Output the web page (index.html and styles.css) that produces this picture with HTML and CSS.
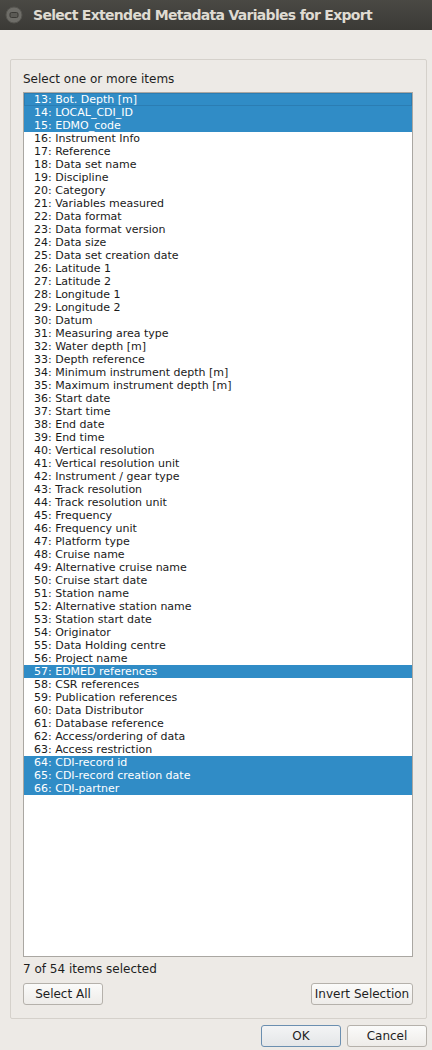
FILE: index.html
```html
<!DOCTYPE html>
<html>
<head>
<meta charset="utf-8">
<link rel="stylesheet" href="styles.css">
</head>
<body>
<div class="titlebar">
  <svg class="close" width="18" height="18" viewBox="0 0 18 18">
    <circle cx="9" cy="9" r="8" fill="#6e6d68" stroke="#55544f" stroke-width="1"/>
    <rect x="5" y="6.5" width="8" height="5" rx="1.5" fill="#5b5a55" stroke="#3a3935" stroke-width="1"/>
  </svg>
  <span class="title">Select Extended Metadata Variables for Export</span>
</div>
<div class="spacer"></div>
<div class="panel">
  <div class="label">Select one or more items</div>
  <div class="list" id="list"></div>
  <div class="status">7 of 54 items selected</div>
  <div class="row-buttons">
    <button class="btn">Select All</button>
    <button class="btn wide">Invert Selection</button>
  </div>
</div>
<div class="dialog-buttons">
  <button class="btn default">OK</button>
  <button class="btn">Cancel</button>
</div>
<script src="app.js"></script>
</body>
</html>
```
FILE: app.js
```js
var items = [
  [13,"Bot. Depth [m]",1],[14,"LOCAL_CDI_ID",1],[15,"EDMO_code",1],
  [16,"Instrument Info"],[17,"Reference"],[18,"Data set name"],[19,"Discipline"],
  [20,"Category"],[21,"Variables measured"],[22,"Data format"],[23,"Data format version"],
  [24,"Data size"],[25,"Data set creation date"],[26,"Latitude 1"],[27,"Latitude 2"],
  [28,"Longitude 1"],[29,"Longitude 2"],[30,"Datum"],[31,"Measuring area type"],
  [32,"Water depth [m]"],[33,"Depth reference"],[34,"Minimum instrument depth [m]"],
  [35,"Maximum instrument depth [m]"],[36,"Start date"],[37,"Start time"],[38,"End date"],
  [39,"End time"],[40,"Vertical resolution"],[41,"Vertical resolution unit"],
  [42,"Instrument / gear type"],[43,"Track resolution"],[44,"Track resolution unit"],
  [45,"Frequency"],[46,"Frequency unit"],[47,"Platform type"],[48,"Cruise name"],
  [49,"Alternative cruise name"],[50,"Cruise start date"],[51,"Station name"],
  [52,"Alternative station name"],[53,"Station start date"],[54,"Originator"],
  [55,"Data Holding centre"],[56,"Project name"],[57,"EDMED references",1],
  [58,"CSR references"],[59,"Publication references"],[60,"Data Distributor"],
  [61,"Database reference"],[62,"Access/ordering of data"],[63,"Access restriction"],
  [64,"CDI-record id",1],[65,"CDI-record creation date",1],[66,"CDI-partner",1]
];
var list = document.getElementById("list");
items.forEach(function (it, i) {
  var d = document.createElement("div");
  d.className = "item" + (it[2] ? " sel" : "") + (i === 0 ? " focus" : "");
  d.textContent = it[0] + ": " + it[1];
  list.appendChild(d);
});
```
FILE: styles.css
```css
html, body {
  margin: 0;
  padding: 0;
}
body {
  width: 432px;
  height: 1050px;
  background: #edeae6;
  font-family: "DejaVu Sans", sans-serif;
  color: #1e1e1e;
  overflow: hidden;
}
.titlebar {
  height: 30px;
  background: linear-gradient(#4a4944, #3b3a36);
  display: flex;
  align-items: center;
  box-sizing: border-box;
  padding-left: 5px;
}
.close {
  display: block;
  flex: none;
}
.title {
  margin-left: 10px;
  font-family: "DejaVu Sans", sans-serif;
  font-weight: bold;
  font-size: 14px;
  letter-spacing: -0.7px;
  color: #dfdbd2;
  white-space: nowrap;
}
.spacer {
  height: 29px;
}
.panel {
  margin-left: 10px;
  width: 417px;
  height: 960px;
  box-sizing: border-box;
  border: 1px solid #d5d1cb;
  border-radius: 2px;
  padding: 12px 13px 13px 12px;
  display: flex;
  flex-direction: column;
}
.label {
  font-size: 12px;
  line-height: 14px;
  height: 14px;
  margin-bottom: 6px;
}
.list {
  height: 865px;
  box-sizing: border-box;
  border: 1px solid #aaa7a2;
  background: #fff;
  font-size: 11px;
  line-height: 13px;
  flex: none;
}
.item {
  height: 13px;
  padding-left: 10px;
  white-space: nowrap;
  color: #1a1a1a;
}
.item.sel {
  background: #308cc6;
  color: #fff;
}
.item.focus {
  box-shadow: inset 0 0 0 1px #2b7db3;
}
.status {
  margin-top: 5px;
  font-size: 12px;
  line-height: 14px;
  height: 14px;
}
.row-buttons {
  margin-top: 7px;
  display: flex;
  justify-content: space-between;
}
.btn {
  font-family: "DejaVu Sans", sans-serif;
  font-size: 12px;
  color: #1e1e1e;
  width: 80px;
  height: 22px;
  padding: 0;
  box-sizing: border-box;
  border: 1px solid #b5b1ab;
  border-radius: 3px;
  background: linear-gradient(#fbfbfa, #eeece9);
  line-height: 20px;
}
.btn.wide {
  width: 102px;
}
.btn.default {
  border-color: #6b8fb0;
  background: linear-gradient(#f3f4f5, #e4e6e8);
}
.dialog-buttons {
  margin-top: 6px;
  width: 427px;
  display: flex;
  justify-content: flex-end;
  gap: 6px;
}
```
